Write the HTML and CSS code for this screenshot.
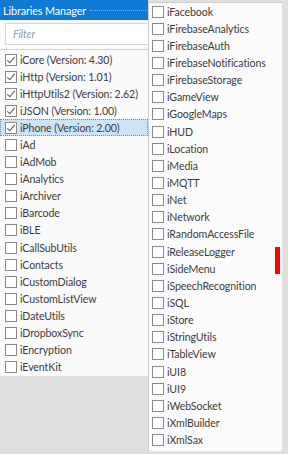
FILE: index.html
```html
<!DOCTYPE html>
<html>
<head>
<meta charset="utf-8">
<link rel="stylesheet" href="styles.css">
</head>
<body>
<div class="screen">
  <div class="window">
    <div class="titlebar"><span class="title">Libraries Manager</span><span class="grip"></span></div>
    <div class="filter-row"><div class="filter">Filter</div></div>
    <ul class="list">
      <li class="item"><span class="cb on"></span>iCore (Version: 4.30)</li>
      <li class="item"><span class="cb on"></span>iHttp (Version: 1.01)</li>
      <li class="item"><span class="cb on"></span>iHttpUtils2 (Version: 2.62)</li>
      <li class="item"><span class="cb on"></span>iJSON (Version: 1.00)</li>
      <li class="item sel"><span class="cb on"></span>iPhone (Version: 2.00)</li>
      <li class="item"><span class="cb"></span>iAd</li>
      <li class="item"><span class="cb"></span>iAdMob</li>
      <li class="item"><span class="cb"></span>iAnalytics</li>
      <li class="item"><span class="cb"></span>iArchiver</li>
      <li class="item"><span class="cb"></span>iBarcode</li>
      <li class="item"><span class="cb"></span>iBLE</li>
      <li class="item"><span class="cb"></span>iCallSubUtils</li>
      <li class="item"><span class="cb"></span>iContacts</li>
      <li class="item"><span class="cb"></span>iCustomDialog</li>
      <li class="item"><span class="cb"></span>iCustomListView</li>
      <li class="item"><span class="cb"></span>iDateUtils</li>
      <li class="item"><span class="cb"></span>iDropboxSync</li>
      <li class="item"><span class="cb"></span>iEncryption</li>
      <li class="item"><span class="cb"></span>iEventKit</li>
    </ul>
  </div>
  <div class="popup">
    <ul class="plist">
      <li class="item"><span class="cb"></span>iFacebook</li>
      <li class="item"><span class="cb"></span>iFirebaseAnalytics</li>
      <li class="item"><span class="cb"></span>iFirebaseAuth</li>
      <li class="item"><span class="cb"></span>iFirebaseNotifications</li>
      <li class="item"><span class="cb"></span>iFirebaseStorage</li>
      <li class="item"><span class="cb"></span>iGameView</li>
      <li class="item"><span class="cb"></span>iGoogleMaps</li>
      <li class="item"><span class="cb"></span>iHUD</li>
      <li class="item"><span class="cb"></span>iLocation</li>
      <li class="item"><span class="cb"></span>iMedia</li>
      <li class="item"><span class="cb"></span>iMQTT</li>
      <li class="item"><span class="cb"></span>iNet</li>
      <li class="item"><span class="cb"></span>iNetwork</li>
      <li class="item"><span class="cb"></span>iRandomAccessFile</li>
      <li class="item"><span class="cb"></span>iReleaseLogger</li>
      <li class="item"><span class="cb"></span>iSideMenu</li>
      <li class="item"><span class="cb"></span>iSpeechRecognition</li>
      <li class="item"><span class="cb"></span>iSQL</li>
      <li class="item"><span class="cb"></span>iStore</li>
      <li class="item"><span class="cb"></span>iStringUtils</li>
      <li class="item"><span class="cb"></span>iTableView</li>
      <li class="item"><span class="cb"></span>iUI8</li>
      <li class="item"><span class="cb"></span>iUI9</li>
      <li class="item"><span class="cb"></span>iWebSocket</li>
      <li class="item"><span class="cb"></span>iXmlBuilder</li>
      <li class="item"><span class="cb"></span>iXmlSax</li>
    </ul>
    <span class="marker"></span>
  </div>
</div>
</body>
</html>
```

FILE: styles.css
```css
* { box-sizing: border-box; }
html, body { margin: 0; padding: 0; }
body {
  width: 288px;
  height: 454px;
  overflow: hidden;
  background: #dfdfdf;
  font-family: Lato, "Noto Sans", sans-serif;
  font-size: 10.6px;
  letter-spacing: -0.1px;
  color: #3c3c3c;
}
.screen {
  display: flex;
  align-items: flex-start;
  width: 288px;
  height: 454px;
}
.window {
  width: 148px;
  flex: none;
  background: #fafafa;
}
.titlebar {
  height: 20px;
  background: #0f79d6;
  color: #fff;
  display: flex;
  align-items: center;
  padding-left: 3px;
  overflow: hidden;
}
.title { font-size: 10.8px; white-space: nowrap; }
.grip {
  flex: 1;
  margin-left: 4px;
  margin-top: 1px;
  border-top: 1px dotted #6fb0ea;
}
.filter-row {
  padding: 3px 0 4px 5px;
  border-bottom: 1px solid #d2d2d2;
}
.filter {
  height: 22px;
  border: 1px solid #d7d7d7;
  border-right: none;
  background: #fff;
  color: #9a9a9a;
  font-style: italic;
  padding-left: 7px;
  line-height: 20px;
}
.list, .plist {
  list-style: none;
  margin: 0;
  padding: 0;
}
.list { padding-top: 1px; }
.item {
  display: flex;
  align-items: center;
  height: 17.1px;
  white-space: nowrap;
  padding-left: 5px;
}
.item.sel {
  background: #cce4f7;
  outline: 1px dotted #6b8fb3;
  outline-offset: -1px;
}
.cb {
  width: 12px;
  height: 12px;
  border: 1px solid #8a8a8a;
  background: #fff;
  margin-right: 3px;
  flex: none;
  position: relative;
}
.cb.on::after {
  content: "";
  position: absolute;
  left: 3px;
  top: 0px;
  width: 3px;
  height: 7px;
  border: solid #555;
  border-width: 0 1.3px 1.3px 0;
  transform: rotate(40deg);
}
.popup {
  position: relative;
  width: 134px;
  height: 449px;
  margin-top: 2px;
  background: #fbfbfb;
  border-top: 1px solid #cfcfcf;
  border-left: 1px solid #d0d0d0;
  flex: none;
}
.plist .item { height: 17.15px; padding-left: 3px; }
.marker {
  position: absolute;
  left: 126px;
  top: 244px;
  width: 5px;
  height: 27px;
  background: #f00;
}
```
